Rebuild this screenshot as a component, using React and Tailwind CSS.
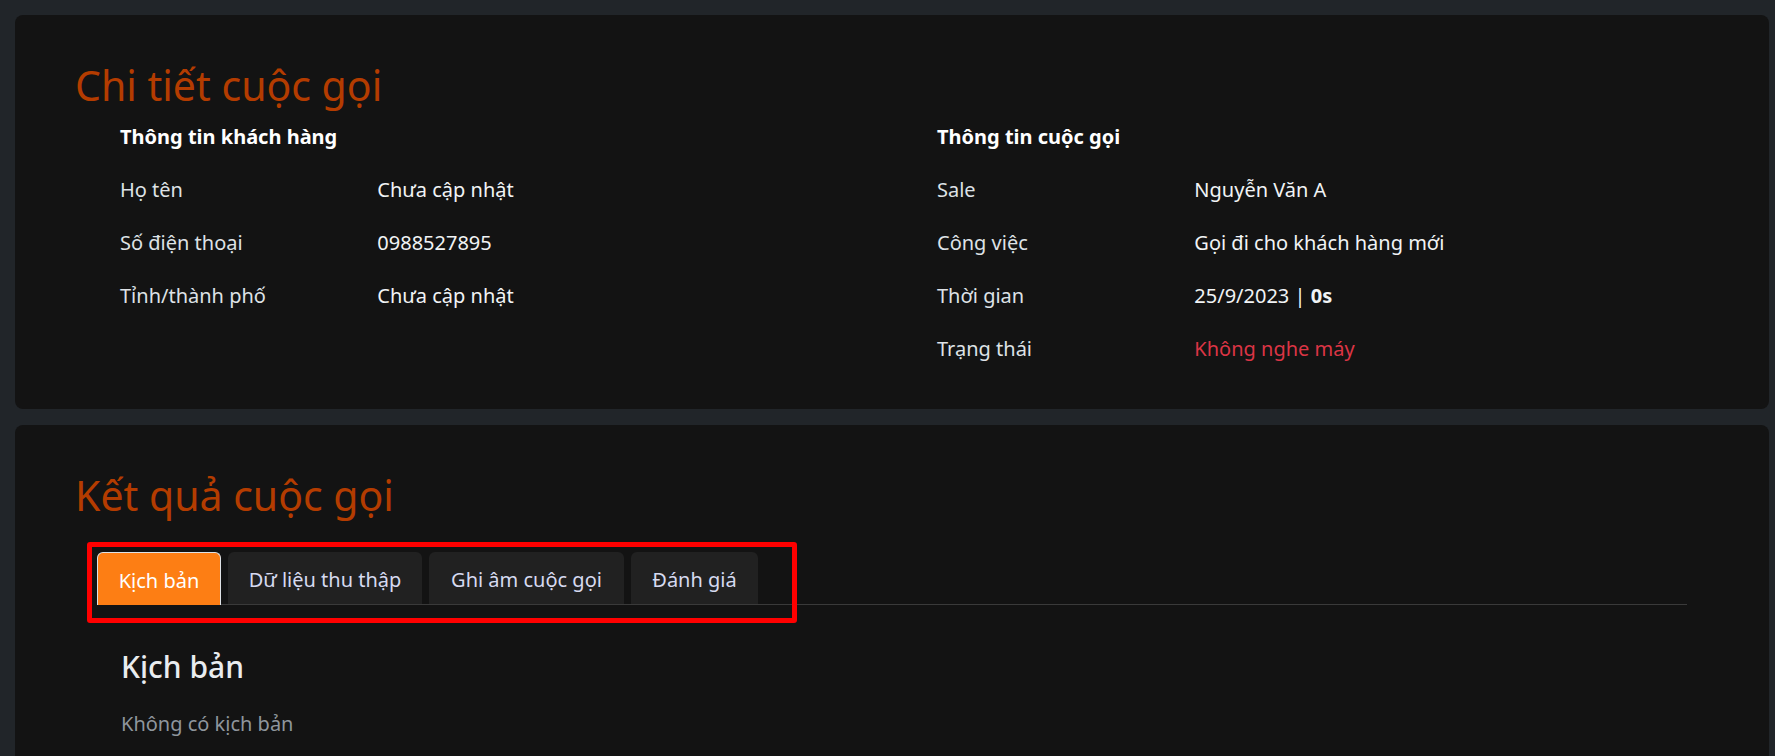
import React from "react";

const KHACH_HANG = [
  { label: "Họ tên", value: "Chưa cập nhật" },
  { label: "Số điện thoại", value: "0988527895" },
  { label: "Tỉnh/thành phố", value: "Chưa cập nhật" },
];

const TABS = [
  { name: "Kịch bản", w: "w-[124px]", active: true },
  { name: "Dữ liệu thu thập", w: "w-[194px]" },
  { name: "Ghi âm cuộc gọi", w: "w-[195px]" },
  { name: "Đánh giá", w: "w-[127px]" },
];

// một dòng nhãn - giá trị
const InfoRow = ({ label, children }) => (
  <div className="grid grid-cols-3 leading-[28px]">
    <div className="text-[#dee2e6]">{label}</div>
    <div className="col-span-2 text-[#f1f3f5]">{children}</div>
  </div>
);

const App = () => {
  return (
    <div className="min-h-screen bg-[#212529] pt-[15px] pl-[15px] pr-[6px] pb-[15px] font-['Noto_Sans',sans-serif] text-[20px] text-[#dee2e6]">
      {/* CHI TIẾT CUỘC GỌI */}
      <section className="rounded-[8px] bg-[#131313] px-[60px] pt-[46px] pb-[46px]">
        <h1 className="text-[41px] leading-[48px] text-[#b43c00]">
          Chi tiết cuộc gọi
        </h1>

        <div className="mt-[14px] grid grid-cols-2">
          {/* thông tin khách hàng */}
          <div className="pl-[45px] flex flex-col gap-[25px]">
            <div className="font-bold text-[20px] leading-[28px] text-white">
              Thông tin khách hàng
            </div>
            {KHACH_HANG.map((r) => (
              <InfoRow key={r.label} label={r.label}>
                {r.value}
              </InfoRow>
            ))}
          </div>

          {/* thông tin cuộc gọi */}
          <div className="pl-[45px] flex flex-col gap-[25px]">
            <div className="font-bold text-[20px] leading-[28px] text-white">
              Thông tin cuộc gọi
            </div>
            <InfoRow label="Sale">Nguyễn Văn A</InfoRow>
            <InfoRow label="Công việc">Gọi đi cho khách hàng mới</InfoRow>
            <InfoRow label="Thời gian">
              25/9/2023 | <span className="font-bold">0s</span>
            </InfoRow>
            <InfoRow label="Trạng thái">
              <span className="text-[#dc3545]">Không nghe máy</span>
            </InfoRow>
          </div>
        </div>
      </section>

      {/* KẾT QUẢ CUỘC GỌI */}
      <section className="mt-[16px] rounded-[8px] bg-[#131313] px-[60px] pt-[46px] pb-[40px]">
        <h1 className="text-[41px] leading-[48px] text-[#b43c00]">
          Kết quả cuộc gọi
        </h1>

        <div className="mx-[22px] mt-[33px]">
          {/* tabs */}
          <div className="relative flex gap-[7px] border-b border-[#3a3a3a]">
            {TABS.map((t) =>
              t.active ? (
                <button
                  key={t.name}
                  type="button"
                  className={`${t.w} -mb-px h-[53px] flex items-center justify-center pt-[3px] rounded-t-[6px] border border-b-0 border-[#dee2e6] bg-[#fd7e14] text-white`}
                >
                  {t.name}
                </button>
              ) : (
                <button
                  key={t.name}
                  type="button"
                  className={`${t.w} h-[52px] flex items-center justify-center pt-[3px] rounded-t-[6px] bg-[#212121] text-[#d6daf0]`}
                >
                  {t.name}
                </button>
              )
            )}
            {/* khung đỏ đánh dấu */}
            <div className="pointer-events-none absolute left-[-10px] top-[-10px] w-[710px] h-[81px] rounded-[3px] border-[5px] border-[#ff0000]" />
          </div>

          {/* nội dung tab */}
          <div className="px-[24px] pt-[44px]">
            <h3 className="text-[30px] leading-[36px] font-medium text-[#e9ecef]">
              Kịch bản
            </h3>
            <p className="mt-[25px] leading-[28px] text-[#8f969d]">
              Không có kịch bản
            </p>
          </div>
        </div>
      </section>
    </div>
  );
};

export default App;
